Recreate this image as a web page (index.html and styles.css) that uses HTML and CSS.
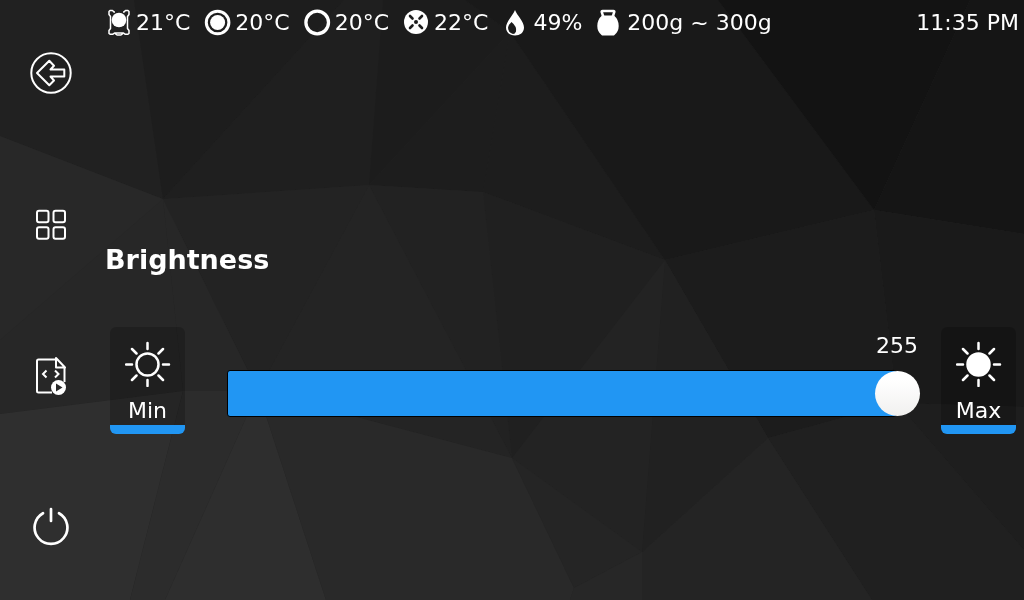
FILE: index.html
```html
<!DOCTYPE html>
<html lang="en">
<head>
<meta charset="utf-8">
<meta name="viewport" content="width=device-width, initial-scale=1">
<title>Brightness</title>
<link rel="stylesheet" href="styles.css">
</head>
<body>
<svg class="backdrop" viewBox="0 0 1024 600" preserveAspectRatio="none" aria-hidden="true">
  <rect width="1024" height="600" fill="#242424"/>
  <path fill="#212121" d="M0 0H134L163 199L0 136Z"/>
  <path fill="#1d1d1d" d="M134 0H344L163 199Z"/>
  <path fill="#1f1f1f" d="M344 0H383L369 185L163 199Z"/>
  <path fill="#1c1c1c" d="M383 0H465L510 32L369 185Z"/>
  <path fill="#1d1d1d" d="M369 185L510 32L483 192Z"/>
  <path fill="#1d1d1d" d="M510 32L665 260L483 192Z"/>
  <path fill="#191919" d="M465 0H718L874 210L665 260L510 32Z"/>
  <path fill="#131313" d="M718 0H970L874 210Z"/>
  <path fill="#151515" d="M970 0H1024V234L874 210Z"/>
  <path fill="#1a1a1a" d="M874 210L1024 234V407L897 403Z"/>
  <path fill="#1c1c1c" d="M665 260L874 210L897 403L768 438Z"/>
  <path fill="#1e1e1e" d="M897 403L1024 407V550Z"/>
  <path fill="#202020" d="M768 438L897 403L1024 550V600H872Z"/>
  <path fill="#242424" d="M768 438L872 600H642V552Z"/>
  <path fill="#212121" d="M665 260L768 438L642 552Z"/>
  <path fill="#232323" d="M665 260L642 552L512 458Z"/>
  <path fill="#202020" d="M483 192L665 260L512 458Z"/>
  <path fill="#222222" d="M369 185L483 192L512 458Z"/>
  <path fill="#242424" d="M369 185L512 458L258 391Z"/>
  <path fill="#232323" d="M163 199L369 185L258 391Z"/>
  <path fill="#272727" d="M163 199L258 391H183Z"/>
  <path fill="#282828" d="M0 136L163 199L0 340Z"/>
  <path fill="#272727" d="M0 340L163 199L183 391L0 414Z"/>
  <path fill="#2f2f2f" d="M0 414L183 391L130 600H0Z"/>
  <path fill="#2c2c2c" d="M183 391H258L165 600H130Z"/>
  <path fill="#2e2e2e" d="M258 391L326 600H165Z"/>
  <path fill="#292929" d="M258 391L512 458L574 588L570 600H326Z"/>
  <path fill="#252525" d="M512 458L642 552L574 588Z"/>
  <path fill="#272727" d="M642 552V600H570L574 588Z"/>
</svg>

<div class="screen">
  <nav class="sidebar" aria-label="Main">
    <button class="nav-button" type="button" aria-label="Back">
      <svg viewBox="0 0 42 42"><circle cx="21" cy="21" r="19.7"/><path d="M7 21L19.300 8.800L24 13.700L20.500 17.500H34.300V24.500H20.500L24 28.500L19.300 33.200Z" stroke-linejoin="round"/></svg>
    </button>
    <button class="nav-button" type="button" aria-label="Menu">
      <svg viewBox="0 0 42 42"><rect x="7" y="7.700" width="11.500" height="11.500" rx="2"/><rect x="23.500" y="7.700" width="11.500" height="11.500" rx="2"/><rect x="7" y="24.200" width="11.500" height="11.500" rx="2"/><rect x="23.500" y="24.200" width="11.500" height="11.500" rx="2"/></svg>
    </button>
    <button class="nav-button" type="button" aria-label="Macros">
      <svg viewBox="0 0 42 42"><path d="M26 4.500H8.500Q7 4.500 7 6V36Q7 37.500 8.500 37.500H22M34.500 12.500V27"/><path d="M26 3V12.500H35Z" stroke-linejoin="round"/><path d="M16.500 15.500L13 19L16.500 22.500M25 15.500L28.500 19L25 22.500"/><circle cx="28.500" cy="32.500" r="7.500" fill="#fff" stroke="none"/><path d="M26 28.500V36.500L32.500 32.500Z" fill="#292929" stroke="none"/></svg>
    </button>
    <button class="nav-button" type="button" aria-label="Power">
      <svg viewBox="0 0 42 42"><path d="M13 7.200A16.400 16.400 0 1 0 29 7.200M21 3V15" stroke-width="2.700" stroke-linecap="round"/></svg>
    </button>
  </nav>

  <div class="panel">
    <header class="status">
      <ul class="readings">
        <li><svg viewBox="0 .5 26 26" aria-hidden="true"><path d="M9 2.500H8L6.500 1H4L3 2V5L4.500 7V19L3 21V24L4 24.700H7L8.500 23.500H17.500L19 24.700H22L23 24V21L21.500 19V7L23 5V2L22 1H19.500L18 2.500H17M9 24L11 25.500H15L17 24" fill="none" stroke="#fff" stroke-width="1.500" stroke-linejoin="round"/><circle cx="13" cy="10.500" r="7.300" fill="#fff"/></svg><span>21°C</span></li>
        <li><svg viewBox="0 .5 26 26" aria-hidden="true"><circle cx="12.600" cy="13" r="11.300" fill="none" stroke="#fff" stroke-width="3"/><circle cx="12.600" cy="13" r="7.500" fill="#fff"/></svg><span>20°C</span></li>
        <li><svg viewBox="0 .5 26 26" aria-hidden="true"><circle cx="12.200" cy="13" r="11.300" fill="none" stroke="#fff" stroke-width="3.300"/></svg><span>20°C</span></li>
        <li><svg viewBox="0 .5 26 26" aria-hidden="true"><circle cx="12" cy="12.500" r="12" fill="#fff"/><path d="M6 6.500L8.500 9M18 6.500L15.500 9M6 18.500L8.500 16M18 18.500L15.500 16" stroke="#1d1d1d" stroke-width="2.600" stroke-linecap="round"/><circle cx="12" cy="12.500" r="2" fill="#1d1d1d"/></svg><span>22°C</span></li>
        <li><svg viewBox="0 .5 26 26" aria-hidden="true"><path d="M12 .500C10 6 3 12 3 18C3 23 7 26 12 26S21 23 21 18C21 12 14 6 12 .500Z" fill="#fff"/><path d="M8.500 12.500Q14 17 13 22Q12 24.500 10 24.500Q5 23 5 18Q5.500 15 8.500 12.500Z" fill="#1b1b1b"/></svg><span>49%</span></li>
        <li><svg viewBox="0 .5 26 26" aria-hidden="true"><path d="M6.500 8L4.700 2.500Q4.500 1.500 5.500 1.500H16.500Q17.500 1.500 17.300 2.500L15.500 8" fill="none" stroke="#fff" stroke-width="2.500"/><path d="M5 6H17Q21.700 10 21.700 16.500Q21.700 22 17.500 25.500Q17 26 16 26H6Q5 26 4.500 25.500Q.300 22 .300 16.500Q.300 10 5 6Z" fill="#fff"/></svg><span>200g ~ 300g</span></li>
      </ul>
      <time datetime="23:35">11:35 PM</time>
    </header>

    <main class="content">
      <h1 class="title"><label for="brightness">Brightness</label></h1>
      <div class="controls">
        <button class="preset" type="button">
          <svg viewBox="0 0 46 46" aria-hidden="true"><circle cx="22.500" cy="23.500" r="11"/><path d="M22.500 2V8M22.500 39V45M1 23.500H7M38 23.500H44M7 8L11.500 12.500M33.500 34.500L38 39M38 8L33.500 12.500M11.500 34.500L7 39"/></svg>
          <span>Min</span>
        </button>
        <div class="level">
          <output class="value" for="brightness">255</output>
          <div class="slider">
            <span class="fill"></span>
            <input id="brightness" class="range" type="range" min="0" max="255" value="255">
          </div>
        </div>
        <button class="preset" type="button">
          <svg viewBox="0 0 46 46" aria-hidden="true"><circle cx="22.500" cy="23.500" r="11" fill="#fff"/><path d="M22.500 2V8M22.500 39V45M1 23.500H7M38 23.500H44M7 8L11.500 12.500M33.500 34.500L38 39M38 8L33.500 12.500M11.500 34.500L7 39"/></svg>
          <span>Max</span>
        </button>
      </div>
    </main>
  </div>
</div>
</body>
</html>
```
FILE: styles.css
```css
* { box-sizing: border-box; }

body {
  margin: 0;
  background: #242424;
  color: #fff;
  font: 22px/26px "DejaVu Sans", sans-serif;
}

button {
  padding: 0;
  border: 0;
  background: none;
  color: inherit;
  font: inherit;
  cursor: pointer;
}

.backdrop {
  position: fixed;
  inset: 0;
  z-index: -1;
  width: 100%;
  height: 100%;
}

.screen {
  display: flex;
  min-height: 100vh;
}

.sidebar {
  display: flex;
  flex: none;
  flex-direction: column;
  align-items: center;
  justify-content: space-between;
  width: 102px;
  padding: 52px 0;
}

.nav-button svg {
  display: block;
  width: 42px;
  height: 42px;
  fill: none;
  stroke: #fff;
  stroke-width: 2;
}

.panel {
  display: flex;
  flex: 1;
  flex-direction: column;
  min-width: 0;
}

.status {
  display: flex;
  align-items: center;
  justify-content: space-between;
  height: 46px;
  padding: 0 5px 0 4px;
  white-space: nowrap;
}

.readings {
  display: flex;
  gap: 15px;
  margin: 0;
  padding: 0;
  list-style: none;
}

.readings li {
  display: flex;
  gap: 4px;
}

.readings svg {
  width: 26px;
  height: 26px;
  overflow: visible;
}

.content {
  display: flex;
  flex: 1;
  flex-direction: column;
  justify-content: center;
  gap: 49px;
  padding: 30px 8px 0;
}

.title {
  margin: 0 -5px;
  font-size: 27px;
  line-height: 36px;
}

.controls {
  display: flex;
  align-items: flex-start;
}

.preset {
  display: flex;
  flex: none;
  flex-direction: column;
  align-items: center;
  gap: 11px;
  width: 75px;
  height: 107px;
  padding-top: 14px;
  border-bottom: 9px solid #2196f3;
  border-radius: 6px;
  background: rgba(0, 0, 0, 0.2);
}

.preset svg {
  width: 46px;
  height: 46px;
  fill: none;
  stroke: #fff;
  stroke-width: 2.5;
  stroke-linecap: round;
}

.level {
  display: flex;
  flex: 1;
  flex-direction: column;
  gap: 11px;
  margin: 0 21px 0 42px;
  padding-top: 6px;
}

.value {
  padding-right: 2px;
  text-align: right;
}

.slider {
  display: grid;
}

.slider > * { grid-area: 1 / 1; }

.fill {
  height: 47px;
  margin-right: 23px;
  border: 1px solid #000;
  border-radius: 3px;
  background: #2196f3;
}

.range {
  width: 100%;
  height: 47px;
  margin: 0;
  background: transparent;
  appearance: none;
}

.range::-webkit-slider-thumb {
  width: 45px;
  height: 45px;
  border-radius: 50%;
  background: linear-gradient(#fff 20%, #f1f0ef);
  appearance: none;
}
```
